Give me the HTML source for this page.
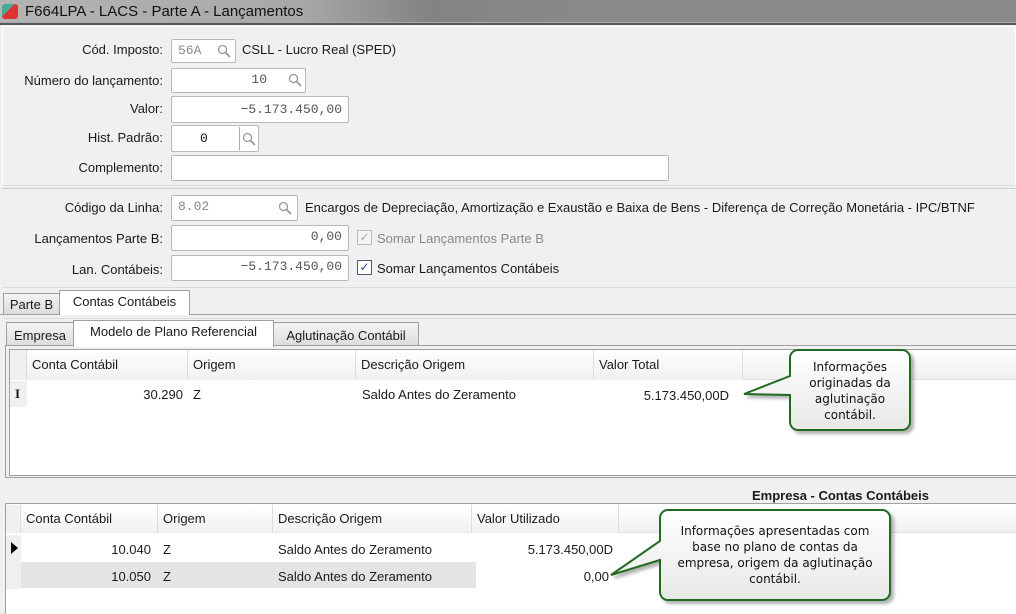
<!DOCTYPE html>
<html><head><meta charset="utf-8"><style>
*{box-sizing:border-box;margin:0;padding:0}
body{width:1016px;height:614px;overflow:hidden;background:#f0f0f0;font-family:"Liberation Sans","DejaVu Sans",sans-serif;font-size:13px;color:#1a1a1a;position:relative}
.a{position:absolute;white-space:nowrap}
.lbl{position:absolute;text-align:right;width:160px;left:3px}
.inp{position:absolute;background:#fff;border:1px solid #b8b8b8;border-radius:2px;font-family:"Liberation Mono",monospace;font-size:13px;color:#555;padding:0 6px;line-height:22px}
.mag{position:absolute;width:14px;height:14px}
.tab{position:absolute;border:1px solid #a0a0a0;border-bottom:none;background:linear-gradient(#f4f4f4,#dcdcdc);font-size:13px;white-space:nowrap;text-align:center;overflow:hidden}
.hd{position:absolute;background:linear-gradient(#fff,#f0f0f0);border-right:1px solid #ddd;padding-left:5px}
.co{position:absolute;text-align:center;font-family:"DejaVu Sans",sans-serif;font-size:12px;line-height:16px;color:#111;white-space:nowrap}
</style></head><body>
<div class="a" style="left:0;top:0;width:1016px;height:23px;background:linear-gradient(90deg,#b4b4b4 0,#a8a8a8 300px,#838383 430px,#8a8a8a 600px,#8a8a8a)"></div>
<div class="a" style="left:0;top:22px;width:1016px;height:3px;background:#55595c;border-top:1px solid #a8a8a8"></div>
<div class="a" style="left:2px;top:4px;width:16px;height:15px;border-radius:3px;background:linear-gradient(135deg,#4a9 40%,#d33 41%)"></div>
<div class="a" style="left:25px;top:3px;font-size:15px;color:#111">F664LPA - LACS - Parte A - Lançamentos</div>

<div class="a" style="left:2px;top:26px;width:1014px;height:160px;border:1px solid #fff;border-bottom:1px solid #d8dde2"></div>
<div class="lbl" style="top:42px">Cód. Imposto:</div>
<div class="inp" style="left:171px;top:39px;width:65px;height:24px;color:#888">56A</div>
<svg class="mag" style="left:217px;top:44px" viewBox="0 0 14 14"><circle cx="5.5" cy="5.5" r="4" fill="none" stroke="#999" stroke-width="1.3"/><path d="M8.5 8.5L13 13" stroke="#999" stroke-width="1.8"/></svg>
<div class="a" style="left:242px;top:42px">CSLL - Lucro Real (SPED)</div>
<div class="lbl" style="top:73px">Número do lançamento:</div>
<div class="inp" style="left:171px;top:68px;width:135px;height:25px;text-align:right;padding-right:38px">10</div>
<svg class="mag" style="left:288px;top:73px" viewBox="0 0 14 14"><circle cx="5.5" cy="5.5" r="4" fill="none" stroke="#999" stroke-width="1.3"/><path d="M8.5 8.5L13 13" stroke="#999" stroke-width="1.8"/></svg>
<div class="lbl" style="top:101px">Valor:</div>
<div class="inp" style="left:171px;top:96px;width:178px;height:27px;text-align:right;line-height:25px">−5.173.450,00</div>
<div class="lbl" style="top:130px">Hist. Padrão:</div>
<div class="inp" style="left:171px;top:125px;width:88px;height:27px;color:#111;line-height:25px;padding-left:28px">0</div>
<div class="a" style="left:239px;top:127px;width:1px;height:23px;background:#aaa"></div>
<svg class="mag" style="left:242px;top:132px" viewBox="0 0 14 14"><circle cx="5.5" cy="5.5" r="4" fill="none" stroke="#999" stroke-width="1.3"/><path d="M8.5 8.5L13 13" stroke="#999" stroke-width="1.8"/></svg>
<div class="lbl" style="top:160px">Complemento:</div>
<div class="inp" style="left:171px;top:155px;width:498px;height:26px"></div>

<div class="a" style="left:2px;top:188px;width:1014px;height:100px;border-top:1px solid #c8ccd0;border-bottom:1px solid #d8dde2"></div>
<div class="lbl" style="top:200px">Código da Linha:</div>
<div class="inp" style="left:171px;top:195px;width:127px;height:26px;color:#888">8.02</div>
<svg class="mag" style="left:278px;top:201px" viewBox="0 0 14 14"><circle cx="5.5" cy="5.5" r="4" fill="none" stroke="#999" stroke-width="1.3"/><path d="M8.5 8.5L13 13" stroke="#999" stroke-width="1.8"/></svg>
<div class="a" style="left:305px;top:200px">Encargos de Depreciação, Amortização e Exaustão e Baixa de Bens - Diferença de Correção Monetária - IPC/BTNF</div>
<div class="lbl" style="top:231px">Lançamentos Parte B:</div>
<div class="inp" style="left:171px;top:225px;width:178px;height:26px;text-align:right">0,00</div>
<div class="a" style="left:357px;top:230px;width:15px;height:15px;border:1px solid #bbb;background:#f4f4f4;color:#aaa;font-size:12px;line-height:13px;text-align:center">✓</div>
<div class="a" style="left:377px;top:231px;color:#888">Somar Lançamentos Parte B</div>
<div class="lbl" style="top:262px">Lan. Contábeis:</div>
<div class="inp" style="left:171px;top:255px;width:178px;height:26px;text-align:right">−5.173.450,00</div>
<div class="a" style="left:357px;top:260px;width:15px;height:15px;border:1px solid #557;background:#fff;color:#2a4aa0;font-size:12px;line-height:13px;text-align:center;font-weight:bold">✓</div>
<div class="a" style="left:377px;top:261px">Somar Lançamentos Contábeis</div>

<div class="tab" style="left:3px;top:293px;width:57px;height:21px;line-height:22px">Parte B</div>
<div class="a" style="left:0;top:314px;width:1016px;height:1px;background:#a0a0a0"></div>
<div class="tab" style="left:59px;top:290px;width:131px;height:25px;background:#fff;line-height:22px">Contas Contábeis</div>
<div class="a" style="left:3px;top:318px;width:1013px;height:168px;border-top:1px solid #ddd"></div>
<div class="tab" style="left:6px;top:322px;width:68px;height:24px;line-height:25px">Empresa</div>
<div class="tab" style="left:273px;top:322px;width:146px;height:24px;line-height:25px">Aglutinação Contábil</div>
<div class="a" style="left:5px;top:345px;width:1011px;height:133px;border:1px solid #a0a0a0;border-right:none;background:#f0f0f0"></div>
<div class="tab" style="left:73px;top:320px;width:201px;height:27px;background:#fff;line-height:22px">Modelo de Plano Referencial</div>
<div class="a" style="left:9px;top:349px;width:1007px;height:127px;background:#fff;border:1px solid #a0a0a0;border-right:none"></div>
<div class="a" style="left:10px;top:350px;width:1006px;height:30px;background:linear-gradient(#fff,#f0f0f0);border-bottom:1px solid #e0e0e0"></div>
<div class="hd" style="left:10px;top:350px;width:17px;height:30px;background:#f0f0f0"></div>
<div class="hd" style="left:27px;top:350px;width:161px;height:30px;line-height:30px">Conta Contábil</div>
<div class="hd" style="left:188px;top:350px;width:168px;height:30px;line-height:30px">Origem</div>
<div class="hd" style="left:356px;top:350px;width:238px;height:30px;line-height:30px">Descrição Origem</div>
<div class="hd" style="left:594px;top:350px;width:149px;height:30px;line-height:30px">Valor Total</div>
<div class="a" style="left:10px;top:381px;width:17px;height:26px;background:#f0f0f0"></div>
<div class="a" style="left:15px;top:386px;font-family:serif;font-weight:bold">I</div>
<div class="a" style="left:27px;top:387px;width:156px;text-align:right">30.290</div>
<div class="a" style="left:193px;top:387px">Z</div>
<div class="a" style="left:362px;top:387px">Saldo Antes do Zeramento</div>
<div class="a" style="left:594px;top:388px;width:135px;text-align:right">5.173.450,00D</div>

<div class="a" style="left:752px;top:488px;font-weight:bold">Empresa - Contas Contábeis</div>
<div class="a" style="left:5px;top:503px;width:1011px;height:111px;background:#fff;border-top:1px solid #a0a0a0;border-left:1px solid #a0a0a0"></div>
<div class="a" style="left:6px;top:505px;width:1010px;height:28px;background:linear-gradient(#fff,#f0f0f0);border-bottom:1px solid #e0e0e0"></div>
<div class="hd" style="left:6px;top:505px;width:15px;height:28px;background:#f0f0f0"></div>
<div class="hd" style="left:21px;top:505px;width:137px;height:28px;line-height:28px">Conta Contábil</div>
<div class="hd" style="left:158px;top:505px;width:115px;height:28px;line-height:28px">Origem</div>
<div class="hd" style="left:273px;top:505px;width:199px;height:28px;line-height:28px">Descrição Origem</div>
<div class="hd" style="left:472px;top:505px;width:147px;height:28px;line-height:28px">Valor Utilizado</div>
<div class="a" style="left:6px;top:535px;width:15px;height:54px;background:#f0f0f0"></div>
<div class="a" style="left:11px;top:542px;width:0;height:0;border-left:7px solid #000;border-top:6px solid transparent;border-bottom:6px solid transparent"></div>
<div class="a" style="left:21px;top:562px;width:455px;height:26px;background:#e4e4e4"></div>
<div class="a" style="left:21px;top:542px;width:130px;text-align:right">10.040</div>
<div class="a" style="left:163px;top:542px">Z</div>
<div class="a" style="left:278px;top:542px">Saldo Antes do Zeramento</div>
<div class="a" style="left:472px;top:542px;width:141px;text-align:right">5.173.450,00D</div>
<div class="a" style="left:21px;top:569px;width:130px;text-align:right">10.050</div>
<div class="a" style="left:163px;top:569px">Z</div>
<div class="a" style="left:278px;top:569px">Saldo Antes do Zeramento</div>
<div class="a" style="left:472px;top:569px;width:137px;text-align:right">0,00</div>

<svg class="a" style="left:0;top:0" width="1016" height="614">
<defs><linearGradient id="g" x1="0" y1="0" x2="0" y2="1"><stop offset="0" stop-color="#fff"/><stop offset="1" stop-color="#e6e8e6"/></linearGradient>
<filter id="s"><feDropShadow dx="3" dy="3" stdDeviation="1.5" flood-color="#000" flood-opacity=".3"/></filter></defs>
<path d="M798 350H902a8 8 0 0 1 8 8V422a8 8 0 0 1-8 8H798a8 8 0 0 1-8-8V395L744 394L790 376V358a8 8 0 0 1 8-8Z" fill="url(#g)" stroke="#226b22" stroke-width="2" filter="url(#s)"/>
<path d="M668 510H882a8 8 0 0 1 8 8V592a8 8 0 0 1-8 8H668a8 8 0 0 1-8-8V560L611 575L660 541V518a8 8 0 0 1 8-8Z" fill="url(#g)" stroke="#226b22" stroke-width="2" filter="url(#s)"/>
</svg>
<div class="co" style="left:790px;top:359px;width:120px">Informações<br>originadas da<br>aglutinação<br>contábil.</div>
<div class="co" style="left:660px;top:523px;width:230px">Informações apresentadas com<br>base no plano de contas da<br>empresa, origem da aglutinação<br>contábil.</div>
</body></html>
